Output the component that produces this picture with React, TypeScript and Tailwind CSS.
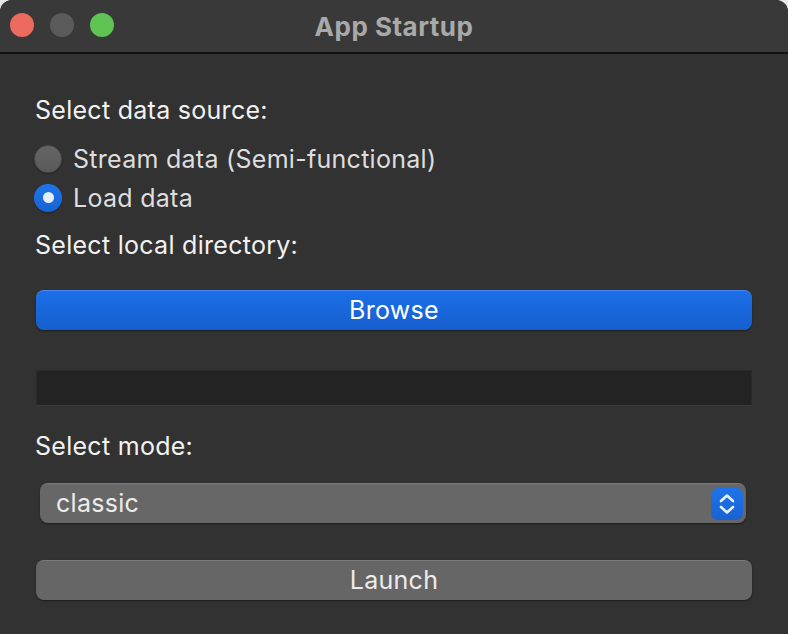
import React from "react";

const font = { fontFamily: "Inter, 'Noto Sans', 'Liberation Sans', sans-serif" };

function Radio({ checked, label }: { checked?: boolean; label: string }) {
  return (
    <div className="flex items-center h-[39px]">
      {checked ? (
        <div className="w-[28px] h-[28px] rounded-full bg-gradient-to-b from-[#1f76ea] to-[#1663d3] flex items-center justify-center shadow-[0_1px_1px_rgba(0,0,0,0.4)]">
          <div className="w-[11px] h-[11px] rounded-full bg-[#e4eefb]" />
        </div>
      ) : (
        <div className="w-[28px] h-[28px] rounded-full bg-gradient-to-b from-[#656565] to-[#5a5a5a] border border-[#4a4a4a] shadow-[0_1px_1px_rgba(0,0,0,0.3)]" />
      )}
      <span className="ml-[11px] text-[25px] tracking-[0.28px] leading-[32px] text-[#dedede]">{label}</span>
    </div>
  );
}

export default function App() {
  return (
    <div className="w-[788px] h-[634px] bg-[#e8e8e8]" style={font}>
      <div className="w-full h-full rounded-t-[12px] overflow-hidden bg-[#323232] flex flex-col">
        {/* title bar */}
        <div className="h-[54px] shrink-0 bg-[#393939] border-b-2 border-[#111111] relative flex items-center justify-center">
          <div className="absolute left-[10px] top-[13px] flex gap-[16px]">
            <div className="w-[24px] h-[24px] rounded-full bg-[#ec6a5e]" />
            <div className="w-[24px] h-[24px] rounded-full bg-[#5a5a5a]" />
            <div className="w-[24px] h-[24px] rounded-full bg-[#5fc454]" />
          </div>
          <span className="text-[26px] tracking-[0.5px] font-bold text-[#a9a9a9]">App Startup</span>
        </div>

        {/* content */}
        <div className="flex flex-col px-[36px] pt-[40px] text-[25px] tracking-[0.28px]">
          <div className="leading-[32px] text-[#f2f2f2] -ml-[1px]">Select data source:</div>
          <div className="mt-[13px] -ml-[2px]">
            <Radio label="Stream data (Semi-functional)" />
            <Radio checked label="Load data" />
          </div>
          <div className="mt-[12px] leading-[32px] text-[#f2f2f2] -ml-[1px]">Select local directory:</div>

          <button className="mt-[29px] h-[40px] rounded-[8px] bg-gradient-to-b from-[#1b6fe8] to-[#165fcf] border-t border-[#4a8af0] shadow-[0_1px_2px_rgba(0,0,0,0.45)] text-white">
            Browse
          </button>

          <div className="mt-[40px] h-[36px] bg-[#232323] border border-[#2a2a2a] border-b-[#3a3a3a]" />

          <div className="mt-[24px] leading-[32px] text-[#f2f2f2] -ml-[1px]">Select mode:</div>

          <div className="mt-[21px] ml-[4px] mr-[6px] h-[40px] rounded-[8px] bg-[#676767] border-t border-[#7a7a7a] shadow-[0_1px_2px_rgba(0,0,0,0.45)] flex items-center justify-between pl-[16px] pr-[3px]">
            <span className="text-[#ececec]">classic</span>
            <div className="w-[32px] h-[32px] rounded-[7px] bg-gradient-to-b from-[#1e74ea] to-[#1762d2] flex items-center justify-center">
              <svg width="18" height="24" viewBox="0 0 18 24" fill="none" stroke="#e8f0fc" strokeWidth="2.6" strokeLinecap="round" strokeLinejoin="round">
                <path d="M3 9 L9 3.5 L15 9" />
                <path d="M3 15 L9 20.5 L15 15" />
              </svg>
            </div>
          </div>

          <button className="mt-[37px] h-[40px] rounded-[8px] bg-[#666666] border-t border-[#7a7a7a] shadow-[0_1px_2px_rgba(0,0,0,0.45)] text-[#ececec]">
            Launch
          </button>
        </div>
      </div>
    </div>
  );
}
